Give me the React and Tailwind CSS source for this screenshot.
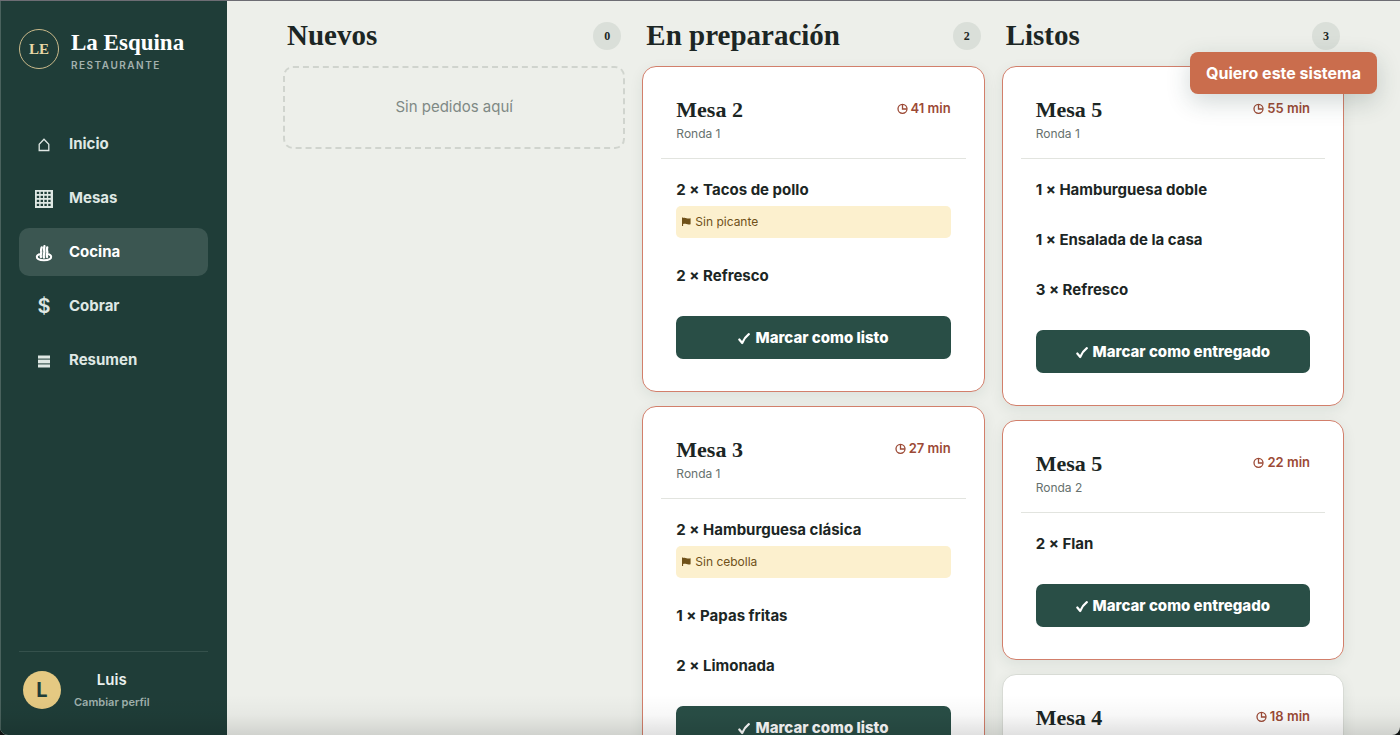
import React from "react";

const serif = "font-['Liberation_Serif',serif] font-bold";

function HomeIcon() {
  return (
    <svg width="20" height="20" viewBox="0 0 20 20" fill="none" stroke="currentColor" strokeWidth="1.3" aria-hidden="true">
      <path d="M5.200 16.500V10.200L10 5.200l4.800 5v6.300z" />
    </svg>
  );
}

function GridIcon() {
  return (
    <svg width="20" height="20" viewBox="0 0 20 20" aria-hidden="true">
      <path fill="currentColor" d="M1 2h18v18H1z" />
      <g className="fill-[#1f3d38]">
        {[3.2, 7.2, 11.2, 15.2].map((y) =>
          [2.8, 6.6, 10.4, 14.2].map((x) => <rect key={`${x}-${y}`} x={x} y={y + 0.6} width="2.4" height="2.2" />)
        )}
      </g>
    </svg>
  );
}

function SteamIcon() {
  return (
    <svg width="20" height="20" viewBox="0 0 20 20" fill="none" stroke="currentColor" strokeLinecap="round" aria-hidden="true">
      <path strokeWidth="2" d="M5.200 12.300C3.600 12.900 2.800 13.800 2.800 14.800c0 2 3.200 3.400 7.200 3.400s7.200-1.400 7.200-3.400c0-1-.8-1.900-2.400-2.500" />
      <path strokeWidth="2.300" d="M7 15c-1-2 .7-3.800.2-5.700-.3-1.300 0-2.600.5-3.900M10 15.500c-1-2.300.8-4.300.3-6.400-.4-1.600-.3-3 .1-4.900M13.100 15c-1-2 .7-3.800.1-5.700-.4-1.300-.3-2.600 0-3.900" />
    </svg>
  );
}

function DollarIcon() {
  return <span className="text-xl leading-5 font-semibold">$</span>;
}

function LinesIcon() {
  return (
    <svg width="20" height="20" viewBox="0 0 20 20" fill="currentColor" aria-hidden="true">
      <path d="M4 5.500h12v3H4zM4 10h12v3H4zM4 14.500h12v3H4z" />
      <path opacity=".4" d="M4 8.500h12V10H4zM4 13h12v1.500H4z" />
    </svg>
  );
}

function ClockIcon() {
  return (
    <svg width="11" height="11" viewBox="0 0 11 11" fill="none" stroke="currentColor" strokeWidth="1.3" aria-hidden="true">
      <circle cx="5.500" cy="5.800" r="4.500" />
      <path d="M5.500 1.500v4.500h4.300" />
    </svg>
  );
}

function FlagIcon() {
  return (
    <svg width="9" height="10" viewBox="0 0 9 10" fill="currentColor" aria-hidden="true">
      <path d="M0 .6h1.100v.4c1.300-.5 2.300-.2 3.400.2 1.100.4 2.300.5 4.100.1v5.900c-1.800.5-3 .3-4.100-.1-1.100-.4-2.100-.5-3.400-.1v2H0z" />
    </svg>
  );
}

function CheckIcon() {
  return (
    <svg width="12" height="12" viewBox="0 0 12 12" fill="none" stroke="currentColor" strokeWidth="2.200" strokeLinecap="round" strokeLinejoin="round" aria-hidden="true">
      <path d="M1.300 6.500l2.900 3.500C5.800 6.300 7.800 3.500 10.800 1.200" />
    </svg>
  );
}

const nav = [
  { label: "Inicio", Icon: HomeIcon },
  { label: "Mesas", Icon: GridIcon },
  { label: "Cocina", Icon: SteamIcon, active: true },
  { label: "Cobrar", Icon: DollarIcon },
  { label: "Resumen", Icon: LinesIcon },
];

const columns = [
  { title: "Nuevos", count: 0, orders: [] },
  {
    title: "En preparación",
    count: 2,
    action: "Marcar como listo",
    orders: [
      {
        table: "Mesa 2",
        round: "Ronda 1",
        time: "41 min",
        late: true,
        items: [{ text: "2 × Tacos de pollo", note: "Sin picante" }, { text: "2 × Refresco" }],
      },
      {
        table: "Mesa 3",
        round: "Ronda 1",
        time: "27 min",
        late: true,
        items: [
          { text: "2 × Hamburguesa clásica", note: "Sin cebolla" },
          { text: "1 × Papas fritas" },
          { text: "2 × Limonada" },
        ],
      },
    ],
  },
  {
    title: "Listos",
    count: 3,
    action: "Marcar como entregado",
    orders: [
      {
        table: "Mesa 5",
        round: "Ronda 1",
        time: "55 min",
        late: true,
        items: [{ text: "1 × Hamburguesa doble" }, { text: "1 × Ensalada de la casa" }, { text: "3 × Refresco" }],
      },
      { table: "Mesa 5", round: "Ronda 2", time: "22 min", late: true, items: [{ text: "2 × Flan" }] },
      { table: "Mesa 4", time: "18 min", late: false, items: [] },
    ],
  },
];

function Sidebar() {
  return (
    <aside className="flex w-[227px] shrink-0 flex-col border-l border-[#4a625d] bg-[#1f3d38] pt-7 pr-[19px] pb-[23px] pl-[18px]">
      <div className="flex items-start gap-3">
        <div className={`flex size-10 shrink-0 items-center justify-center rounded-full border border-[#c9b98a] text-[15px] text-[#e9d9a6] ${serif}`}>
          LE
        </div>
        <div className="pt-[2px]">
          <div className={`text-[23px] leading-6 text-white ${serif}`}>La Esquina</div>
          <div className="mt-[2px] text-[10px] leading-4 font-semibold tracking-[1.5px] text-[#a3b1ae]">RESTAURANTE</div>
        </div>
      </div>

      <nav className="mt-[47px] flex flex-col gap-[6px]">
        {nav.map(({ label, Icon, active }) => (
          <a
            key={label}
            href={`#${label.toLowerCase()}`}
            aria-current={active ? "page" : undefined}
            className={`flex h-12 items-center gap-[15px] rounded-[10px] px-[15px] text-[15px] font-bold ${
              active ? "bg-[#3b5651] text-white" : "text-[#dfe8e4]"
            }`}
          >
            <span className="flex w-5 justify-center">
              <Icon />
            </span>
            {label}
          </a>
        ))}
      </nav>

      <div className="mt-auto border-t border-[#35514c] pt-4">
        <button type="button" className="flex items-center gap-[13px] px-1">
          <span className="flex size-[38px] items-center justify-center rounded-full bg-[#e5c982] text-xl font-bold text-[#1f3d38]">
            L
          </span>
          <span className="flex flex-col text-center">
            <span className="text-[15px] leading-6 font-semibold text-[#eaf0ee]">Luis</span>
            <span className="text-[11px] leading-5 font-semibold text-[#9fb0ac]">Cambiar perfil</span>
          </span>
        </button>
      </div>
    </aside>
  );
}

function OrderCard({ order, action }) {
  return (
    <article
      className={`rounded-[14px] border bg-white p-[18px] shadow-[0_4px_14px_rgba(31,61,56,0.08)] ${
        order.late ? "border-[#d27f6b]" : "border-[#d8dbd5]"
      }`}
    >
      <header className="flex items-start justify-between border-b border-[#e2e4df] px-[15px] pt-3 pb-[14px]">
        <div>
          <h3 className={`text-[22px] leading-[26px] text-[#1c2624] ${serif}`}>{order.table}</h3>
          {order.round && <p className="mt-px text-xs leading-5 text-[#66716e]">{order.round}</p>}
        </div>
        <span className="flex items-center gap-[3px] text-[13px] leading-[22px] font-semibold text-[#9c4a36]">
          <ClockIcon />
          {order.time}
        </span>
      </header>
      {order.items.length > 0 && (
        <>
          <ul className="mt-[6px] px-[15px]">
            {order.items.map((item) => (
              <li key={item.text} className="py-[13px]">
                <div className="text-[15px] leading-6 font-bold text-[#1c2624]">{item.text}</div>
                {item.note && (
                  <div className="mt-1 flex h-8 items-center gap-1 rounded-[5px] bg-[#fcf0ce] px-[6px] text-xs text-[#6f5119]">
                    <FlagIcon />
                    {item.note}
                  </div>
                )}
              </li>
            ))}
          </ul>
          <div className="px-[15px] pt-[15px] pb-[14px]">
            <button
              type="button"
              className="flex h-[43px] w-full items-center justify-center gap-[5px] rounded-[7px] bg-[#294e46] pt-[2px] text-[15px] font-extrabold text-white"
            >
              <CheckIcon />
              {action}
            </button>
          </div>
        </>
      )}
    </article>
  );
}

export default function App() {
  return (
    <div className="h-screen bg-[#101413] font-['Inter',sans-serif] antialiased">
      <div className="relative flex h-full overflow-hidden rounded-b-lg border-t border-[#6d6d74] bg-[#edefea]">
        <Sidebar />

        <main className="min-w-0 flex-1 overflow-y-auto px-14 pt-5 [scrollbar-width:none]">
          <div className="grid grid-cols-3 items-start gap-[17px]">
            {columns.map((col) => (
              <section key={col.title}>
                <h2 className={`flex h-[30px] items-center justify-between px-1 text-[29px] text-[#1c2624] ${serif}`}>
                  {col.title}
                  <span className="flex size-7 items-center justify-center rounded-full bg-[#dadfd9] text-xs">
                    {col.count}
                  </span>
                </h2>
                <div className="mt-[15px] flex flex-col gap-[14px]">
                  {col.orders.length === 0 && (
                    <p className="flex h-[83px] items-center justify-center rounded-[10px] border-2 border-dashed border-[#d0d4ce] text-[15px] text-[#7f8985]">
                      Sin pedidos aquí
                    </p>
                  )}
                  {col.orders.map((order) => (
                    <OrderCard key={order.table + order.time} order={order} action={col.action} />
                  ))}
                </div>
              </section>
            ))}
          </div>
        </main>

        <button
          type="button"
          className="absolute top-[51px] right-[23px] h-[42px] rounded-lg bg-[#ca6d4d] px-4 text-base font-bold text-white shadow-[0_8px_24px_rgba(31,61,56,0.2)]"
        >
          Quiero este sistema
        </button>

        <div className="pointer-events-none absolute inset-x-0 bottom-0 h-10 bg-linear-to-b from-transparent via-black/3 to-black/12" />
      </div>
    </div>
  );
}
